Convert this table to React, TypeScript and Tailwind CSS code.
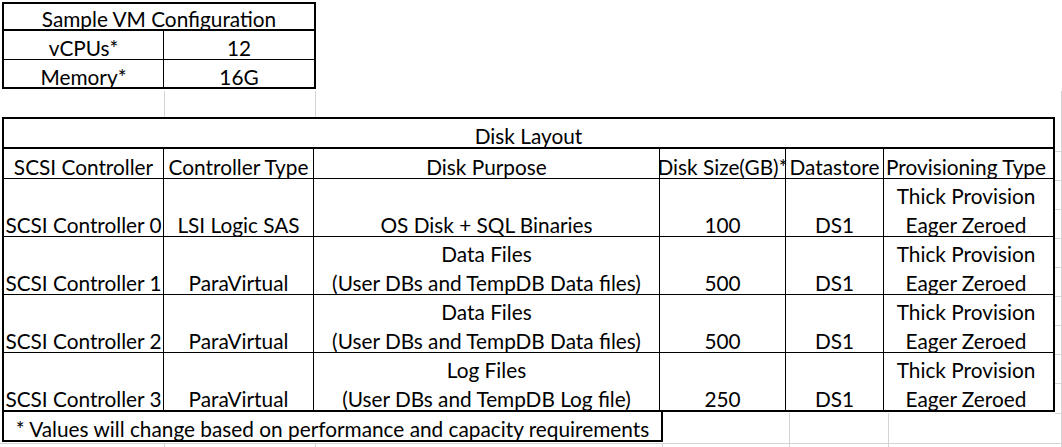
import React from "react";

type Row = {
  ctrl: string;
  type: string;
  purpose: string[];
  size: string;
  ds: string;
  prov: string[];
};

const rows: Row[] = [
  { ctrl: "SCSI Controller 0", type: "LSI Logic SAS", purpose: ["OS Disk + SQL Binaries"], size: "100", ds: "DS1", prov: ["Thick Provision", "Eager Zeroed"] },
  { ctrl: "SCSI Controller 1", type: "ParaVirtual", purpose: ["Data Files", "(User DBs and TempDB Data files)"], size: "500", ds: "DS1", prov: ["Thick Provision", "Eager Zeroed"] },
  { ctrl: "SCSI Controller 2", type: "ParaVirtual", purpose: ["Data Files", "(User DBs and TempDB Data files)"], size: "500", ds: "DS1", prov: ["Thick Provision", "Eager Zeroed"] },
  { ctrl: "SCSI Controller 3", type: "ParaVirtual", purpose: ["Log Files", "(User DBs and TempDB Log file)"], size: "250", ds: "DS1", prov: ["Thick Provision", "Eager Zeroed"] },
];

const colW = ["w-[160px]", "w-[150px]", "w-[346px]", "w-[126px]", "w-[98px]", "w-[164px]"];

function Cell({ w, last, children }: { w: string; last?: boolean; children: React.ReactNode }) {
  return (
    <div
      className={
        "flex flex-col items-center justify-end whitespace-nowrap text-center " +
        w +
        (last ? "" : " border-r border-black")
      }
    >
      <div className="translate-y-[3px] flex flex-col items-center">{children}</div>
    </div>
  );
}

function Lines({ lines }: { lines: string[] }) {
  return (
    <>
      {lines.map((l, i) => (
        <div key={i}>{l}</div>
      ))}
    </>
  );
}

export default function App() {
  const hStubs = [151, 180, 209, 238, 267, 296, 325, 354, 383, 413, 443];
  return (
    <div className="relative w-[1062px] h-[447px] overflow-hidden bg-white text-black font-[Lato,sans-serif] text-[20.8px]">
      {/* background gridlines */}
      <div className="absolute inset-0 z-0" aria-hidden>
        <div className="absolute left-[164px] top-[91px] h-[28px] w-px bg-[#d4d4d4]" />
        <div className="absolute left-[315px] top-[91px] h-[28px] w-px bg-[#d4d4d4]" />
        <div className="absolute left-[1061px] top-[91px] bottom-0 w-px bg-[#d4d4d4]" />
        {hStubs.map((y) => (
          <div key={y} className="absolute left-[1055px] w-[7px] h-px bg-[#d4d4d4]" style={{ top: y }} />
        ))}
        <div className="absolute left-0 right-0 top-[443px] h-px bg-[#d4d4d4]" />
        <div className="absolute left-[164px] top-[443px] bottom-0 w-px bg-[#d4d4d4]" />
        <div className="absolute left-[315px] top-[443px] bottom-0 w-px bg-[#d4d4d4]" />
        <div className="absolute left-[662px] top-[443px] bottom-0 w-px bg-[#d4d4d4]" />
        <div className="absolute left-[789px] top-[413px] bottom-0 w-px bg-[#d4d4d4]" />
        <div className="absolute left-[888px] top-[413px] bottom-0 w-px bg-[#d4d4d4]" />
      </div>

      <div className="relative z-10 flex flex-col items-start pl-[2px] pt-[2px]">
        {/* Sample VM Configuration */}
        <div className="w-[314px] border-2 border-black bg-white">
          <div className="h-[27px] leading-[27px] flex items-end justify-center border-b-2 border-black whitespace-nowrap">
            <span className="translate-y-[3px]">Sample VM Configuration</span>
          </div>
          <div className="flex h-[29px] border-b border-black leading-[28px]">
            <div className="w-[160px] border-r border-black flex items-end justify-center">
              <span className="translate-y-[3px]">vCPUs*</span>
            </div>
            <div className="flex-1 flex items-end justify-center">
              <span className="translate-y-[3px]">12</span>
            </div>
          </div>
          <div className="flex h-[27px] leading-[27px]">
            <div className="w-[160px] border-r border-black flex items-end justify-center">
              <span className="translate-y-[3px]">Memory*</span>
            </div>
            <div className="flex-1 flex items-end justify-center">
              <span className="translate-y-[3px]">16G</span>
            </div>
          </div>
        </div>

        {/* Disk Layout */}
        <div className="mt-[28px] w-[1053px] border-2 border-black bg-white">
          <div className="h-[30px] leading-[28px] flex items-start justify-center border-b-2 border-black">
            <span className="translate-y-[3px]">Disk Layout</span>
          </div>
          <div className="flex h-[30px] leading-[29px] border-b border-black">
            <Cell w={colW[0]}>SCSI Controller</Cell>
            <Cell w={colW[1]}>Controller Type</Cell>
            <Cell w={colW[2]}>Disk Purpose</Cell>
            <Cell w={colW[3]}>Disk Size(GB)*</Cell>
            <Cell w={colW[4]}>Datastore</Cell>
            <Cell w={colW[5]} last>
              Provisioning Type
            </Cell>
          </div>
          {rows.map((r, i) => (
            <div
              key={i}
              className={
                "flex leading-[29px] " + (i < rows.length - 1 ? "h-[58px] border-b border-black" : "h-[57px]")
              }
            >
              <Cell w={colW[0]}>{r.ctrl}</Cell>
              <Cell w={colW[1]}>{r.type}</Cell>
              <Cell w={colW[2]}>
                <Lines lines={r.purpose} />
              </Cell>
              <Cell w={colW[3]}>{r.size}</Cell>
              <Cell w={colW[4]}>{r.ds}</Cell>
              <Cell w={colW[5]} last>
                <Lines lines={r.prov} />
              </Cell>
            </div>
          ))}
        </div>

        {/* footer note */}
        <div className="w-[661px] h-[30px] border-2 border-t-0 border-black bg-white leading-[28px] flex items-start justify-center whitespace-nowrap">
          <span className="translate-y-[3px]">* Values will change based on performance and capacity requirements</span>
        </div>
      </div>
    </div>
  );
}
